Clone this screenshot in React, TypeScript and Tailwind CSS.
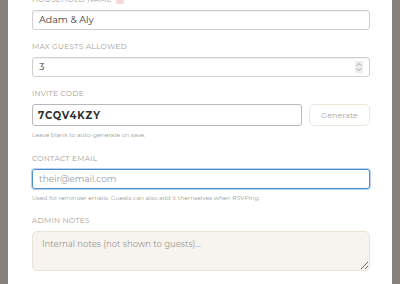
import React from "react"

const font = { fontFamily: '"Montserrat", "DejaVu Sans", "Liberation Sans", sans-serif' }

function Label({ children }: { children: React.ReactNode }) {
  return (
    <div className="text-[7.5px] leading-[10px] tracking-[0.03em] uppercase text-[#a79e96] mb-[5px] flex items-center gap-[4px]">
      {children}
    </div>
  )
}

export default function App() {
  return (
    <div className="w-[400px] h-[284px] bg-[#877f7a] flex overflow-hidden" style={font}>
      <div className="ml-[8px] w-[384px] h-full bg-white px-[24px] overflow-hidden">
        <div className="mt-[-5px] w-[338px] flex flex-col">
          {/* Household name */}
          <Label>
            Household name
            <span className="inline-block w-[8px] h-[8px] rounded-[2px] bg-[#f6d6d6] text-[6px] leading-[8px] text-center text-[#d98c8c]">*</span>
          </Label>
          <div className="h-[20px] rounded-[3px] border border-[#cfcfcf] shadow-[inset_0_1px_1px_rgba(0,0,0,0.06)] flex items-center px-[6px] text-[9.5px] text-[#3a3a3a]">
            Adam &amp; Aly
          </div>

          {/* Max guests */}
          <div className="mt-[12px]">
            <Label>Max guests allowed</Label>
            <div className="h-[20px] rounded-[3px] border border-[#cfcfcf] shadow-[inset_0_1px_1px_rgba(0,0,0,0.06)] flex items-center justify-between pl-[6px] pr-[6px] text-[9.5px] text-[#3a3a3a]">
              <span>3</span>
              <span className="w-[8px] h-[12px] bg-[#ececef] rounded-[1px] flex flex-col items-center justify-center">
                <svg width="6" height="10" viewBox="0 0 6 10" fill="none" stroke="#8a8a8a" strokeWidth="0.8">
                  <path d="M1 3.5 L3 1.5 L5 3.5" />
                  <path d="M1 6.5 L3 8.5 L5 6.5" />
                </svg>
              </span>
            </div>
          </div>

          {/* Invite code */}
          <div className="mt-[12px]">
            <Label>Invite code</Label>
            <div className="flex gap-[7px]">
              <div className="flex-1 h-[22px] rounded-[3px] border border-[#b9b9b9] flex items-center px-[5px] text-[10px] font-bold tracking-[0.09em] text-[#2f2f2f]">
                7CQV4KZY
              </div>
              <button
                type="button"
                className="w-[61px] h-[22px] rounded-[5px] border border-[#efe6da] bg-white text-[8px] text-[#a5a5a5]"
              >
                Generate
              </button>
            </div>
            <div className="mt-[5px] text-[6px] leading-[8px] text-[#9a9a9a]">Leave blank to auto-generate on save.</div>
          </div>

          {/* Contact email */}
          <div className="mt-[15px]">
            <Label>Contact email</Label>
            <div className="h-[20px] rounded-[3px] border border-[#4b8fcb] ring-1 ring-[#4b8fcb]/40 flex items-center px-[6px] text-[9px] text-[#9b9b9b]">
              their@email.com
            </div>
            <div className="mt-[5px] text-[6px] leading-[8px] text-[#9a9a9a]">
              Used for reminder emails. Guests can also add it themselves when RSVPing.
            </div>
          </div>

          {/* Admin notes */}
          <div className="mt-[14px]">
            <Label>Admin notes</Label>
            <textarea
              readOnly
              placeholder="Internal notes (not shown to guests)..."
              className="block w-full h-[40px] rounded-[5px] border border-[#ebe3d8] bg-[#f7f4ef] px-[9px] py-[6px] text-[8.5px] leading-[12px] text-[#444] placeholder:text-[#9a9590] outline-none"
            />
          </div>
        </div>
      </div>
    </div>
  )
}
